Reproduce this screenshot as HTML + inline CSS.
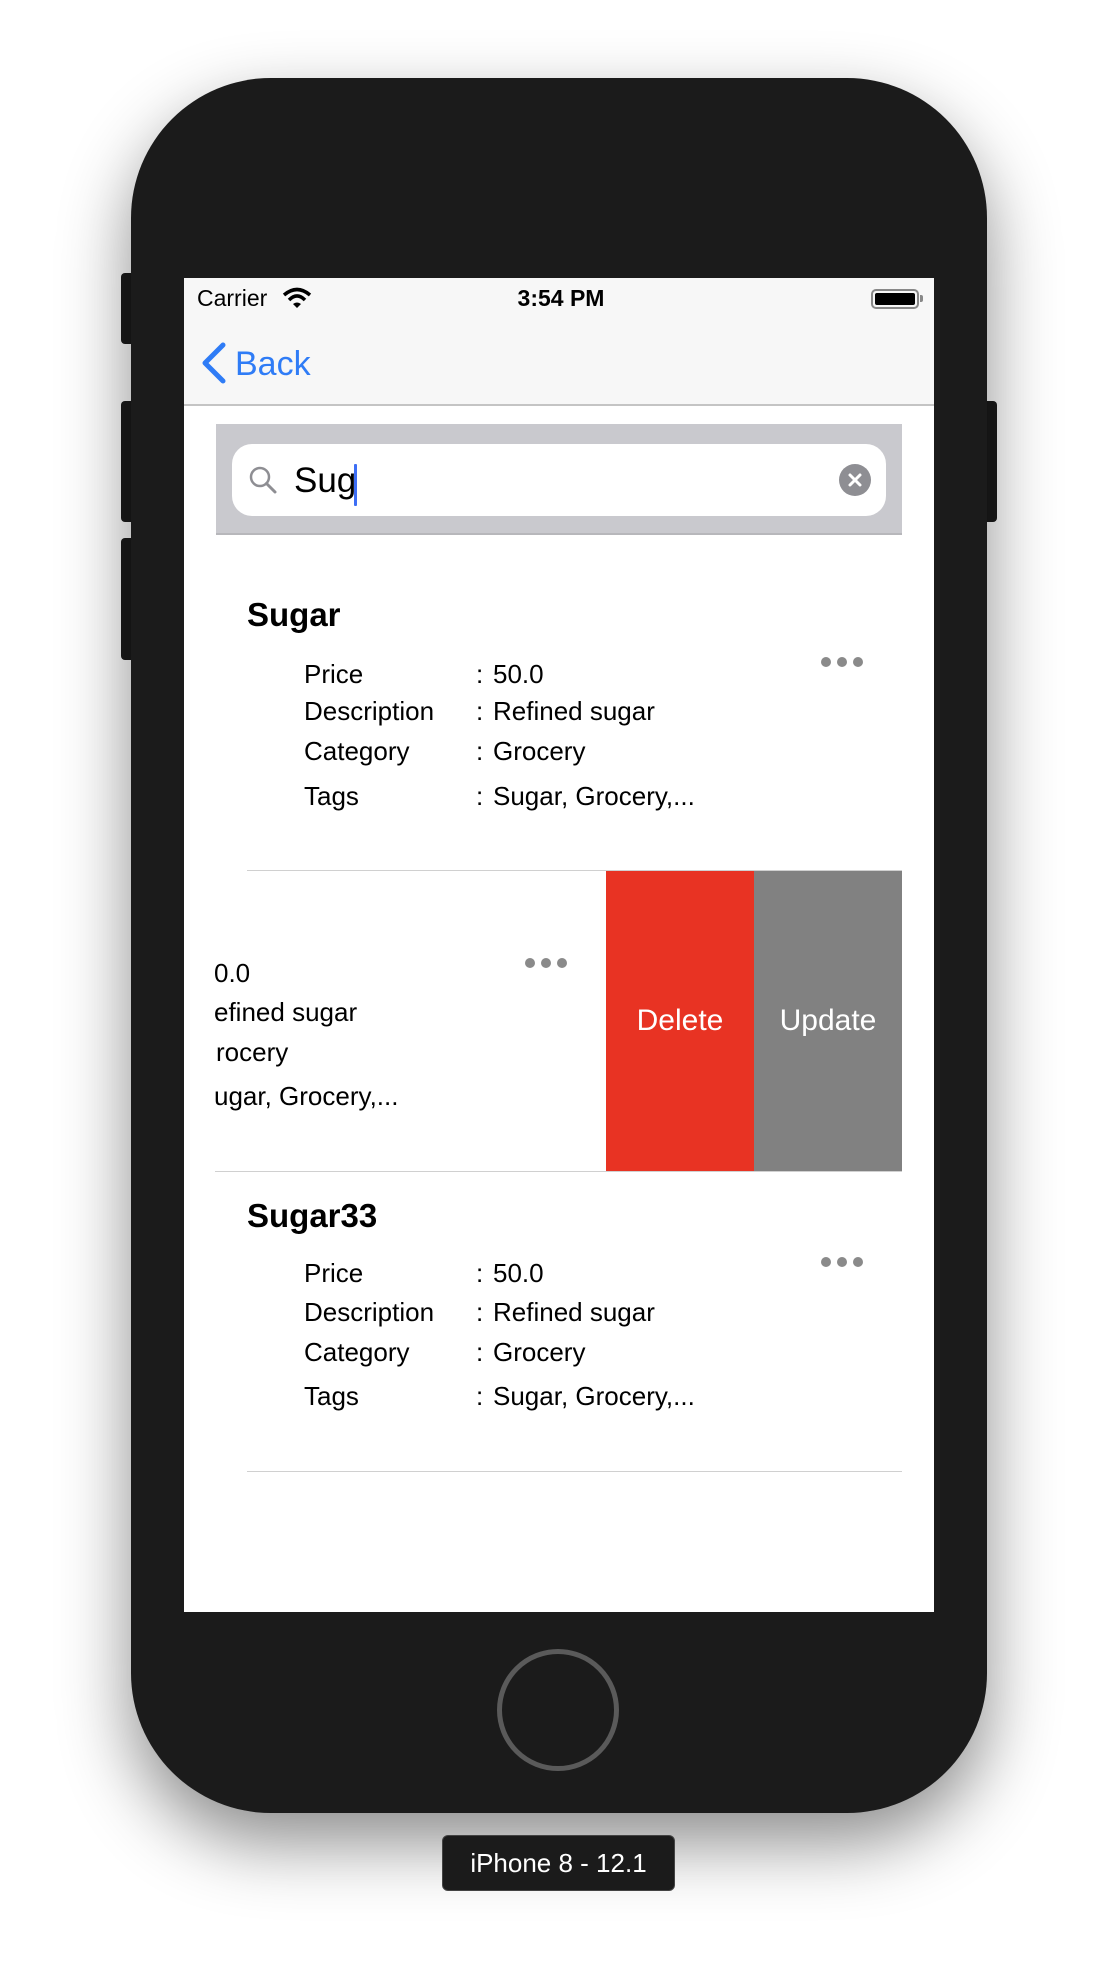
<!DOCTYPE html>
<html><head><meta charset="utf-8"><style>
*{margin:0;padding:0;box-sizing:border-box}
body{width:1118px;height:1962px;background:#fff;position:relative;overflow:hidden;font-family:"Liberation Sans",sans-serif}
.a{position:absolute}
.t{position:absolute;white-space:nowrap;line-height:40px;height:40px}
.phone{left:131px;top:78px;width:856px;height:1735px;background:#1b1b1b;border-radius:140px;box-shadow:0 30px 70px rgba(0,0,0,.45)}
.btn{background:#1b1b1b;border-radius:4px}
.screen{left:184px;top:278px;width:750px;height:1334px;background:#fff;overflow:hidden}
.lbl{font-size:26px;color:#000}
.dots{position:absolute;width:44px;height:10px}
.dots i{position:absolute;top:0;width:10px;height:10px;border-radius:50%;background:#8a8a8a}
</style></head><body>
<div class="a btn" style="left:121px;top:273px;width:14px;height:71px"></div>
<div class="a btn" style="left:121px;top:401px;width:14px;height:121px"></div>
<div class="a btn" style="left:121px;top:538px;width:14px;height:122px"></div>
<div class="a btn" style="left:983px;top:401px;width:14px;height:121px"></div>
<div class="a phone"></div>
<div class="a" style="left:497px;top:1649px;width:122px;height:122px;border-radius:50%;border:5px solid #5a5a5a"></div>
<div class="a" style="left:442px;top:1835px;width:233px;height:56px;background:#1b1b1b;border-radius:6px;border:1px solid #444;color:#fff;font-size:26px;line-height:54px;text-align:center">iPhone 8 - 12.1</div>

<div class="a screen">
 <!-- status + nav (coords relative to screen: left 184, top 278) -->
 <div class="a" style="left:0;top:0;width:750px;height:128px;background:#f7f7f7;border-bottom:2px solid #c4c4c4"></div>
 <div class="t" style="left:13px;top:0;font-size:23px">Carrier</div>
 <svg class="a" style="left:98px;top:9px" width="30" height="22" viewBox="0 0 30 22"><path d="M2 8 Q15 -3 28 8" stroke="#000" stroke-width="3.5" fill="none"/><path d="M7 13 Q15 5 23 13" stroke="#000" stroke-width="3.5" fill="none"/><path d="M11 17 L15 21 L19 17 Q15 14 11 17Z" fill="#000"/></svg>
 <div class="t" style="left:0;width:750px;top:0;font-size:23px;font-weight:bold;text-align:center;padding-left:4px">3:54 PM</div>
 <div class="a" style="left:687px;top:11px;width:48px;height:20px;border:2px solid #888;border-radius:5px;padding:2px"><div style="width:100%;height:100%;background:#000;border-radius:2px"></div></div>
 <div class="a" style="left:736px;top:17px;width:3px;height:7px;background:#888;border-radius:0 2px 2px 0"></div>
 <svg class="a" style="left:16px;top:64px" width="28" height="42" viewBox="0 0 28 42"><path d="M23 3 L5 21 L23 39" stroke="#2f7cf6" stroke-width="5" fill="none" stroke-linecap="round" stroke-linejoin="round"/></svg>
 <div class="t" style="left:51px;top:64px;font-size:34px;color:#2f7cf6;line-height:44px;height:44px">Back</div>

 <!-- search -->
 <div class="a" style="left:32px;top:146px;width:686px;height:111px;background:#c9c9ce;border-bottom:2px solid #b7b7bb"></div>
 <div class="a" style="left:48px;top:166px;width:654px;height:72px;background:#fff;border-radius:20px"></div>
 <svg class="a" style="left:64px;top:187px" width="30" height="30" viewBox="0 0 30 30"><circle cx="12" cy="12" r="9" stroke="#8e8e93" stroke-width="2.5" fill="none"/><path d="M18.5 18.5 L27 27" stroke="#8e8e93" stroke-width="3" stroke-linecap="round"/></svg>
 <div class="t" style="left:110px;top:182px;font-size:35px;line-height:42px;height:42px">Sug</div>
 <div class="a" style="left:170px;top:186px;width:3px;height:42px;background:#3d6ef5;border-radius:1px"></div>
 <div class="a" style="left:655px;top:186px;width:32px;height:32px;border-radius:50%;background:#8e8e93"></div>
 <svg class="a" style="left:655px;top:186px" width="32" height="32" viewBox="0 0 32 32"><path d="M11 11 L21 21 M21 11 L11 21" stroke="#fff" stroke-width="3" stroke-linecap="round"/></svg>

 <!-- row 1 -->
 <div class="t" style="left:63px;top:317px;font-size:33px;font-weight:bold">Sugar</div>
 <div class="t lbl" style="left:120px;top:376px">Price</div><div class="t lbl" style="left:292px;top:376px">:</div><div class="t lbl" style="left:309px;top:376px">50.0</div>
 <div class="t lbl" style="left:120px;top:413px">Description</div><div class="t lbl" style="left:292px;top:413px">:</div><div class="t lbl" style="left:309px;top:413px">Refined sugar</div>
 <div class="t lbl" style="left:120px;top:453px">Category</div><div class="t lbl" style="left:292px;top:453px">:</div><div class="t lbl" style="left:309px;top:453px">Grocery</div>
 <div class="t lbl" style="left:120px;top:498px">Tags</div><div class="t lbl" style="left:292px;top:498px">:</div><div class="t lbl" style="left:309px;top:498px">Sugar, Grocery,...</div>
 <div class="dots" style="left:637px;top:379px"><i style="left:0"></i><i style="left:16px"></i><i style="left:32px"></i></div>
 <div class="a" style="left:63px;top:592px;width:655px;height:1px;background:#d0d0d0"></div>

 <!-- row 2 swiped -->
 <div class="t lbl" style="left:30px;top:675px">0.0</div>
 <div class="t lbl" style="left:30px;top:714px">efined sugar</div>
 <div class="t lbl" style="left:32px;top:754px">rocery</div>
 <div class="t lbl" style="left:30px;top:798px">ugar, Grocery,...</div>
 <div class="dots" style="left:341px;top:680px"><i style="left:0"></i><i style="left:16px"></i><i style="left:32px"></i></div>
 <div class="a" style="left:422px;top:593px;width:148px;height:300px;background:#e83323;color:#fff;font-size:30px;text-align:center;line-height:300px">Delete</div>
 <div class="a" style="left:570px;top:593px;width:148px;height:300px;background:#818181;color:#fff;font-size:30px;text-align:center;line-height:300px">Update</div>
 <div class="a" style="left:31px;top:893px;width:687px;height:1px;background:#d0d0d0"></div>

 <!-- row 3 -->
 <div class="t" style="left:63px;top:918px;font-size:33px;font-weight:bold">Sugar33</div>
 <div class="t lbl" style="left:120px;top:975px">Price</div><div class="t lbl" style="left:292px;top:975px">:</div><div class="t lbl" style="left:309px;top:975px">50.0</div>
 <div class="t lbl" style="left:120px;top:1014px">Description</div><div class="t lbl" style="left:292px;top:1014px">:</div><div class="t lbl" style="left:309px;top:1014px">Refined sugar</div>
 <div class="t lbl" style="left:120px;top:1054px">Category</div><div class="t lbl" style="left:292px;top:1054px">:</div><div class="t lbl" style="left:309px;top:1054px">Grocery</div>
 <div class="t lbl" style="left:120px;top:1098px">Tags</div><div class="t lbl" style="left:292px;top:1098px">:</div><div class="t lbl" style="left:309px;top:1098px">Sugar, Grocery,...</div>
 <div class="dots" style="left:637px;top:979px"><i style="left:0"></i><i style="left:16px"></i><i style="left:32px"></i></div>
 <div class="a" style="left:63px;top:1193px;width:655px;height:1px;background:#d0d0d0"></div>
</div>
</body></html>
